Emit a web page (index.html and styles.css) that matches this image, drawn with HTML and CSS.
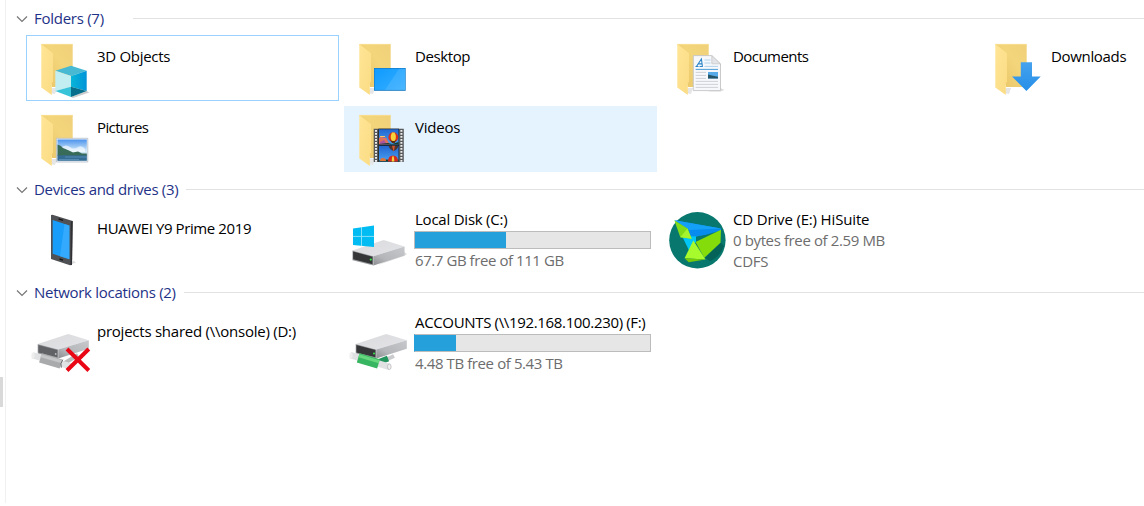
FILE: index.html
```html
<!DOCTYPE html>
<html lang="en">
<head>
<meta charset="utf-8">
<title>This PC</title>
<link rel="stylesheet" href="styles.css">
</head>
<body>
<svg class="defs" width="0" height="0" aria-hidden="true">
  <defs>
    <linearGradient id="gBack" x1="0" y1="1" x2="1" y2="0"><stop offset="0" stop-color="#e8c465"/><stop offset=".6" stop-color="#f3d57b"/><stop offset="1" stop-color="#f0d17a"/></linearGradient>
    <linearGradient id="gFlap" x1="0" y1="0" x2="1" y2="1"><stop offset="0" stop-color="#ffe596"/><stop offset="1" stop-color="#fbdc84"/></linearGradient>
    <linearGradient id="gTop" x1="0" y1="0" x2="1" y2="1"><stop offset="0" stop-color="#d9dadc"/><stop offset="1" stop-color="#e4e4e8"/></linearGradient>
    <linearGradient id="gSide" x1="0" y1="1" x2="1" y2="0"><stop offset="0" stop-color="#8b8d90"/><stop offset=".35" stop-color="#b4b6b9"/><stop offset="1" stop-color="#c6c8cb"/></linearGradient>
    <linearGradient id="gBlue" x1="0" y1="0" x2="1" y2="1"><stop offset="0" stop-color="#0f9bff"/><stop offset="1" stop-color="#36aeff"/></linearGradient>
    <linearGradient id="gCube" x1="0" y1="0" x2="1" y2="0"><stop offset="0" stop-color="#08b5d8"/><stop offset="1" stop-color="#0093d8"/></linearGradient>
    <linearGradient id="gArrow" x1="0" y1="0" x2="0" y2="1"><stop offset="0" stop-color="#46a2ee"/><stop offset="1" stop-color="#258fe8"/></linearGradient>
    <linearGradient id="gSky" x1="0" y1="0" x2="0" y2="1"><stop offset="0" stop-color="#4c93ec"/><stop offset=".55" stop-color="#d5ebfb"/><stop offset="1" stop-color="#8db9ce"/></linearGradient>
    <linearGradient id="gFilm" x1="0" y1="0" x2="0" y2="1"><stop offset="0" stop-color="#2166d0"/><stop offset="1" stop-color="#4aa0f2"/></linearGradient>
    <symbol id="folder" viewBox="0 0 71 66">
      <path d="M24 58l5 1 2-6h-5z" fill="#e6e6e6"/>
      <path d="M15.3 9H46.7V52H26z" fill="url(#gBack)"/>
      <path d="M15.5 9.4H46.6" stroke="#f8df92" stroke-width=".9"/>
      <path d="M15.3 9L27 18.3V47L25.8 47.8V60L15.3 52.5z" fill="url(#gFlap)"/>
    </symbol>
    <symbol id="drive" viewBox="0 0 71 66">
      <path d="M11.7 35L42.3 25 62.8 31.3 32.3 40.6z" fill="url(#gTop)"/>
      <path d="M32.3 40.6L62.8 31.3V39.8L32.3 49.4z" fill="url(#gSide)"/>
      <path d="M11.7 35L32.3 40.6V49.4L11.7 44.4z" fill="#9b9da0"/>
      <path class="face" d="M12.4 36L31.4 41.1V48.3L12.4 43.5z"/>
    </symbol>
  </defs>
</svg>
<div class="window">
  <aside class="nav-edge"><div class="thumb"></div></aside>
  <main class="content">
    <section class="group folders">
      <h2 class="group-head"><svg class="chev" viewBox="0 0 12 12"><path d="M1 3.5l5 5 5-5"/></svg><span class="w-folders">Folders (7)</span><i class="rule"></i></h2>
      <div class="tiles">
        <div class="tile focused">
          <svg class="icon" viewBox="0 0 71 66"><use href="#folder"/>
            <path d="M45 62l15.7-6 2.5 1.5L47 63z" fill="#ccc"/>
            <path d="M29.3 35.7L45 30.7 60.7 35.7 45 41z" fill="#48b9d3"/>
            <path d="M29.3 35.7L45 41V52L29.3 56z" fill="#c2eef1"/>
            <path d="M29.3 56L45 51.7V62z" fill="#38c3d9"/>
            <path d="M45 41L60.7 35.7V56L45 51.7z" fill="url(#gCube)"/>
            <path d="M45 51.7L60.7 56 45 62z" fill="#076e8b"/>
          </svg><div class="info"><div class="name w-3d">3D Objects</div></div></div>
        <div class="tile">
          <svg class="icon" viewBox="0 0 71 66"><use href="#folder"/>
            <path d="M30 33H61.7V55.8H30z" fill="#1479c4"/><path d="M30.6 33.7H61.2V54.9H30.6z" fill="url(#gBlue)"/>
            <path d="M61.2 33.7V54.9H41L55 33.7z" fill="#fff" opacity=".1"/>
          </svg><div class="info"><div class="name w-desktop">Desktop</div></div></div>
        <div class="tile">
          <svg class="icon" viewBox="0 0 71 66"><use href="#folder"/>
            <path d="M58.5 53l4 2-4 1.5H46z" fill="#ddd"/>
            <path d="M31.3 20.6H49.8L58.5 29V55.6H31.3z" fill="#f7f8fb" stroke="#c4c4c4" stroke-width=".9"/>
            <path d="M49.8 20.6V28.8H58.5z" fill="#e3e4e7" stroke="#bbb" stroke-width=".6"/>
            <path class="doc-a" d="M33.5 31.5h3M37.5 31.5h3.4M34.6 31.3L39.4 24l1 7.3M36.6 28.9h3.4"/>
            <path d="M42.5 25h6M42.5 28h6M42.5 31.4h13.5" stroke="#a7cde9" stroke-width=".9"/>
            <path d="M33.7 34.4H56" stroke="#4c9dd8"/>
            <path d="M33.7 37.4H44M33.7 40.4H44M33.7 43.4H44M33.7 46.4H56M33.7 49.4H56M33.7 52.4H56" stroke="#c3c6cc" stroke-width=".8"/>
            <path d="M46 37H56V43.5H46z" fill="#56abe8"/><path d="M46 39.5l4 1 6 1.3V43.5H46z" fill="#275567"/>
          </svg><div class="info"><div class="name w-documents">Documents</div></div></div>
        <div class="tile">
          <svg class="icon" viewBox="0 0 71 66"><use href="#folder"/>
            <path d="M40.8 27.2H52V41.4H60.7L46.4 56 32 41.4H40.8z" fill="url(#gArrow)"/>
          </svg><div class="info"><div class="name w-downloads">Downloads</div></div></div>
        <div class="tile">
          <svg class="icon" viewBox="0 0 71 66"><use href="#folder"/>
            <path d="M30.4 32.3H61.8V56H30.4z" fill="#eef4fa" stroke="#b5bcc6" stroke-width=".8"/>
            <path d="M31.5 33.5H60.8V54.7H31.5z" fill="url(#gSky)"/>
            <path d="M36 41q4-3 8 0t8 0q4-2 7 2v3H36z" fill="#fff" opacity=".6"/>
            <path d="M31.5 38.5Q35 39 37 42L43 44.5 47 46.5 52 45.5 56 47.5H60.8V50H31.5z" fill="#386c58"/>
            <path d="M31.5 49.3H60.8V54.7H31.5z" fill="#356c94"/>
            <path d="M39 51h22M33 53.5h20" stroke="#6093b9" stroke-width=".8"/>
          </svg><div class="info"><div class="name w-pictures">Pictures</div></div></div>
        <div class="tile hovered">
          <svg class="icon" viewBox="0 0 71 66"><use href="#folder"/>
            <path d="M29.7 22.7H59.8V56H29.7z" fill="#58595b"/>
            <path d="M32 24V56M57.4 24V56" stroke="#eee" stroke-width="2" stroke-dasharray="1.8 1.2"/>
            <path d="M34.4 22.7H55V56H34.4z" fill="#111"/>
            <path d="M35 23.2H54.6V38.6H35z" fill="url(#gFilm)"/><path d="M35 39.7H54.6V55.6H35z" fill="url(#gFilm)"/>
            <path d="M35 32l3-1.5 2 1.5 2-.5 2 4 2 3H35z" fill="#e0705c"/><path d="M36 36l4-2 3 4.6h-7z" fill="#a9569e"/><path d="M36 30.5h5" stroke="#f5c26d"/>
            <path d="M35 38l9-1 4 1 6.6-2V38.6H35zM35 54.5l8-1 6 1 5.6-1V55.6H35z" fill="#163b2d"/>
            <circle cx="49.3" cy="31.2" r="4.9" fill="#d8301c"/><path d="M48 26.5a9 9 0 000 9h2.6a9 9 0 000-9z" fill="#f7d33b"/><path d="M46 33.6q3.3 3 6.6 0l-2 3.4h-2.6z" fill="#5b2b12"/>
            <path d="M44.5 39.7h10q-1 4-5 5.2-4-1.4-5-5.2z" fill="#4e3630"/><path d="M48 39.7h3l-1.4 6z" fill="#d8552c"/>
            <path d="M44 55.6q0-6 5-6t5 6z" fill="#d52a1c"/><path d="M47.8 55.6q0-5.5 1.2-5.5t1.3 5.5z" fill="#f7d33b"/><path d="M36 55q0-3 3-3t3 3z" fill="#dc7438"/>
          </svg><div class="info"><div class="name w-videos">Videos</div></div></div>
      </div>
    </section>

    <section class="group">
      <h2 class="group-head"><svg class="chev" viewBox="0 0 12 12"><path d="M1 3.5l5 5 5-5"/></svg><span class="w-devices">Devices and drives (3)</span><i class="rule"></i></h2>
      <div class="tiles">
        <div class="tile single">
          <svg class="icon" viewBox="0 0 71 66">
            <path d="M46 58l4-1.5-3-2z" fill="#ddd"/>
            <path d="M25 9L26.5 8.7 46.7 15 46 59 44 59.3 25 53z" fill="#505155"/>
            <path d="M44.8 15.2L46.7 15 46 59 44.5 59z" fill="#303134"/>
            <path d="M26.7 14L43.4 19.6V53.2L26.7 47.8z" fill="#199dfb"/>
            <path d="M43.4 19.6V53.2L34 50.2 38.5 18z" fill="#45b3ff" opacity=".6"/>
            <path d="M32.5 12.9l4.5 1.4M33.5 53l3.5 1.1" stroke="#151515" stroke-width="1.4"/>
          </svg><div class="info"><div class="name w-huawei">HUAWEI Y9 Prime 2019</div></div></div>
        <div class="tile detailed">
          <svg class="icon dark" viewBox="0 0 71 66">
            <path d="M34 59l26-9 3-2-3-2z" fill="#ddd"/>
            <g transform="translate(-3.5 8) scale(1.02 1.04)"><use href="#drive" width="71" height="66"/></g>
            <circle cx="26.8" cy="53.6" r="1.1" fill="#3be84b"/>
            <path d="M9 22.4L30 19.6V41L9 38.9z" fill="#00bcf2"/>
            <path d="M17.5 21V40M9 30.4H30" stroke="#a6e8fa" stroke-width=".8"/>
          </svg><div class="info"><div class="name w-local">Local Disk (C:)</div><div class="meter"><div class="fill" style="width:38.8%"></div></div><div class="sub w-localsub">67.7 GB free of 111 GB</div></div></div>
        <div class="tile detailed">
          <svg class="icon" viewBox="0 0 71 66">
            <circle cx="35.4" cy="34.3" r="28.2" fill="#08786f"/>
            <path d="M43 52L58.3 36.3 62 40Q57 52 48 55z" fill="#056259"/>
            <path d="M12.5 14.2L59 22.6V24.5L36 31 28 30 26 22z" fill="#078ced"/><path d="M12.5 14.2L59 22.6 27 24z" fill="#15a0f8"/>
            <path d="M34 30.5L44 29 40 32z" fill="#08786f"/>
            <path d="M20 30L34 30.3V36L27.3 45z" fill="#00c6f5"/>
            <path d="M33.5 36L59 23.7 58.5 36.8 42.3 51.8z" fill="#84dc0b"/>
            <path d="M12.3 14.3L25.5 22.5 29.7 32.7 18.3 31.3z" fill="#80dc18"/><path d="M25.5 22.5L29.7 32.7 18.3 31.3z" fill="#a6f42e"/>
            <path d="M31.3 34.5L43.5 53.5 22.6 52.2z" fill="#a7fb2d"/><path d="M22.6 52.2L43.5 53.5 26.7 56.3z" fill="#75cb08"/>
          </svg><div class="info"><div class="name w-cd">CD Drive (E:) HiSuite</div><div class="sub w-cdsub">0 bytes free of 2.59 MB</div><div class="sub w-cdfs">CDFS</div></div></div>
      </div>
    </section>

    <section class="group">
      <h2 class="group-head"><svg class="chev" viewBox="0 0 12 12"><path d="M1 3.5l5 5 5-5"/></svg><span class="w-network">Network locations (2)</span><i class="rule"></i></h2>
      <div class="tiles">
        <div class="tile single">
          <svg class="icon gray" viewBox="0 0 71 66">
            <path d="M37 55L52 46" stroke="#bbb" stroke-width="4"/>
            <use href="#drive" width="71" height="66"/>
            <path d="M6.5 46.2L45 57.5" stroke="#e1e2e4" stroke-width="6.4"/>
            <path d="M14.5 48.9L35 55" stroke="#a8aaac" stroke-width="9.6"/><path d="M15 46.7L36 52.8" stroke="#c4c5c7" stroke-width="3"/>
            <ellipse cx="7" cy="46.4" rx="1.6" ry="3" fill="#eee"/>
            <path d="M36.8 50.7q-3 3.5-1.5 8" fill="none" stroke="#686a6c"/>
            <circle cx="29.7" cy="45" r=".9" fill="#bbb"/>
            <path d="M41 40L62.8 61.5M62.8 40L41 61.5" stroke="#e90716" stroke-width="4"/>
          </svg><div class="info"><div class="name w-projects">projects shared (\\onsole) (D:)</div></div></div>
        <div class="tile detailed">
          <svg class="icon dark" viewBox="0 0 71 66">
            <path d="M37 53L50 47" stroke="#c9cbcd" stroke-width="4"/><path d="M35 53L44 49.5" stroke="#24945d" stroke-width="6"/>
            <use href="#drive" width="71" height="66"/>
            <path d="M6.5 46.2L45.5 57.9" stroke="#dfe1e3" stroke-width="6.6"/>
            <path d="M14.2 48.8L34.5 54.9" stroke="#38b560" stroke-width="9.6"/><path d="M14.9 46.7L35.2 52.8" stroke="#67d77f" stroke-width="3.2"/>
            <ellipse cx="7" cy="46.4" rx="1.6" ry="3" fill="#eee"/><ellipse cx="45.3" cy="57.8" rx="1.8" ry="2.8" fill="#f0f0f0" stroke="#b7b9bb" stroke-width=".8"/>
            <circle cx="30" cy="44.6" r="1" fill="#3be84b"/>
          </svg><div class="info"><div class="name w-accounts">ACCOUNTS (\\192.168.100.230) (F:)</div><div class="meter joined"><div class="fill" style="width:17.3%"></div></div><div class="sub w-accsub">4.48 TB free of 5.43 TB</div></div></div>
      </div>
    </section>
  </main>
</div>
</body>
</html>
```
FILE: styles.css
```css
* { box-sizing: border-box; }
body { margin: 0; background: #fff; color: #000; font: 15px/21px "Segoe UI", "Open Sans", "Noto Sans", sans-serif; overflow: hidden; }
.defs { position: absolute; }
.window { display: flex; width: 1144px; height: 506px; }
.nav-edge { width: 6px; height: 503px; border-right: 1px solid #f1f1f1; padding-top: 377px; flex: none; }
.thumb { width: 3px; height: 30px; background: #d9d9d9; }
.content { width: 1138px; padding-top: 2px; overflow: hidden; }
.group { height: 103px; }
.group.folders { height: 171px; }
.group-head { display: flex; align-items: center; height: 33px; margin: 0; padding-left: 10px; font-size: 15px; font-weight: 400; line-height: 21px; color: #1e3287; white-space: nowrap; }
.chev { width: 12px; height: 12px; margin-right: 6px; fill: none; stroke: #777; stroke-width: 1.2; }
.rule { flex: 1; height: 1px; margin-left: 8px; background: #e2e2e2; }
.folders .rule { margin-left: 29px; }
.tiles { display: grid; grid-template-columns: repeat(4, 313px); gap: 5px; padding-left: 20px; }
.tile { display: flex; height: 66px; }
.focused { box-shadow: inset 0 0 0 1px #99d1ff; }
.hovered { background: #e5f3ff; }
.icon { width: 71px; height: 66px; flex: none; }
.dark { color: #343638; }
.gray { color: #606265; }
.face { fill: currentColor; }
.doc-a { fill: none; stroke: #2e86c8; stroke-width: 1.1; }
.info { padding-top: 11px; white-space: nowrap; }
.single .info { padding-top: 12px; }
.detailed .info { padding-top: 3px; }
.sub { color: #6d6d6d; }
.meter { width: 237px; height: 18px; margin: 1px 0 1px -1px; border: 1px solid #bcbcbc; background: #e6e6e6; }
.joined { border-left-color: #26a0da; }
.fill { height: 100%; background: #26a0da; }

/* Per-label tracking */
.w-folders { letter-spacing: -.27px; }
.w-3d { letter-spacing: -.3px; }
.w-desktop { letter-spacing: -.4px; }
.w-documents { letter-spacing: -.55px; }
.w-downloads { letter-spacing: -.33px; }
.w-pictures { letter-spacing: -.62px; }
.w-videos { letter-spacing: -.2px; }
.w-devices { letter-spacing: -.32px; }
.w-huawei { letter-spacing: -.4px; }
.w-local { letter-spacing: -.23px; }
.w-localsub { letter-spacing: -.43px; }
.w-cd { letter-spacing: -.16px; }
.w-cdsub { letter-spacing: -.38px; }
.w-cdfs { letter-spacing: -.25px; }
.w-network { letter-spacing: -.29px; }
.w-projects { letter-spacing: -.24px; }
.w-accounts { letter-spacing: -.34px; }
.w-accsub { letter-spacing: -.4px; }
```
